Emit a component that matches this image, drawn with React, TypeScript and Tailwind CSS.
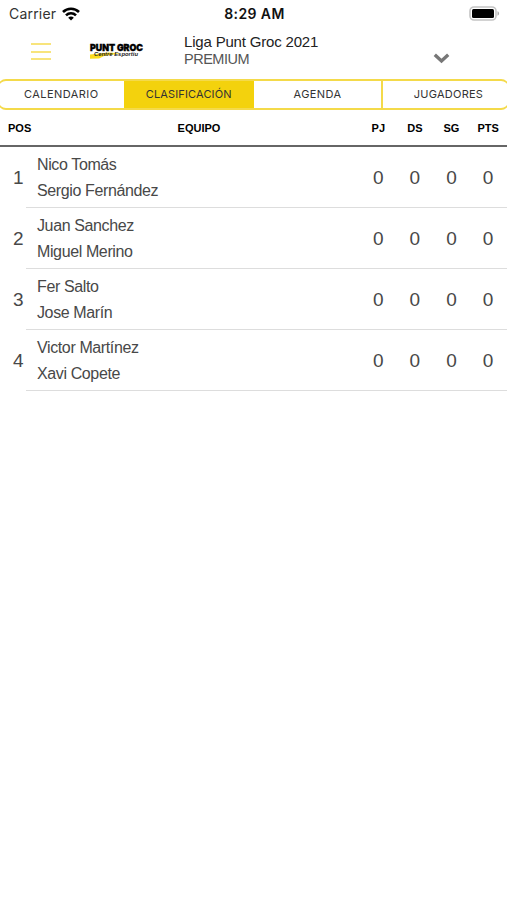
const tabs = [
  { label: 'CALENDARIO', className: 'w-[124.5px] tracking-[0.45px]' },
  { label: 'CLASIFICACIÓN', className: 'w-[130.5px] bg-[#f3d20d] tracking-[0.15px]' },
  { label: 'AGENDA', className: 'w-[129px] border-r-2 border-[#f4da4a] tracking-[0.4px]' },
  { label: 'JUGADORES', className: 'w-[127px] pl-1 tracking-[0.25px]' },
];

const teams = [
  { pos: 1, players: ['Nico Tomás', 'Sergio Fernández'], stats: [0, 0, 0, 0] },
  { pos: 2, players: ['Juan Sanchez', 'Miguel Merino'], stats: [0, 0, 0, 0] },
  { pos: 3, players: ['Fer Salto', 'Jose Marín'], stats: [0, 0, 0, 0] },
  { pos: 4, players: ['Victor Martínez', 'Xavi Copete'], stats: [0, 0, 0, 0] },
];

function StatusBar() {
  return (
    <div className="grid h-[27px] grid-cols-3 items-center pl-[9px] pr-[7px] font-['Inter',sans-serif]">
      <div className="flex items-center gap-[6px]">
        <span className="text-[14px] tracking-[0.2px] text-[#333]">Carrier</span>
        <svg width="18" height="14" viewBox="0 0 18 14" fill="none" stroke="#000" strokeWidth="2.6">
          <path d="M1 5C5.4 0.6 12.6 0.6 17 5" />
          <path d="M4 8.3C6.8 5.5 11.2 5.5 14 8.3" />
          <path d="M9 13.5L6.2 10.7C7.7 9.2 10.3 9.2 11.8 10.7Z" fill="#000" stroke="none" />
        </svg>
      </div>
      <span className="text-center text-[14px] font-semibold tracking-[0.4px] text-[#111]">8:29 AM</span>
      <svg className="justify-self-end" width="31" height="15" viewBox="0 0 31 15">
        <rect x="1" y="1" width="26" height="13" rx="4" fill="#fff" stroke="#c4c4c4" strokeWidth="1.6" />
        <rect x="3" y="3" width="22" height="9" rx="1.5" fill="#000" />
        <path d="M28.5 5.3C30.6 6 30.6 9 28.5 9.7Z" fill="#aaa" />
      </svg>
    </div>
  );
}

function Logo() {
  return (
    <svg className="overflow-visible" width="56" height="18" viewBox="0 0 56 18">
      <path d="M1 11.5L20 9.5L31 10.5L15 13L10 15.4L1 15.8Z" fill="#fbdc20" />
      <text x="1" y="7.6" textLength="53" lengthAdjust="spacingAndGlyphs" fontFamily="Inter, sans-serif" fontWeight="900" fontSize="9.6" fill="#000" stroke="#000" strokeWidth="0.4">
        PUNT GROC
      </text>
      <text x="5" y="12.8" textLength="44" lengthAdjust="spacingAndGlyphs" fontFamily="Liberation Sans, sans-serif" fontStyle="italic" fontWeight="700" fontSize="4.5" fill="#222">
        Centre Esportiu
      </text>
    </svg>
  );
}

function Header() {
  return (
    <header className="flex h-[52px] items-start">
      <div className="ml-[31px] mt-[16px] flex w-5 flex-col gap-[5.5px]">
        <span className="h-[2px] bg-[#f8e47c]" />
        <span className="h-[2px] bg-[#f8e47c]" />
        <span className="h-[2px] bg-[#f8e47c]" />
      </div>
      <div className="ml-[38px] mt-[16px]">
        <Logo />
      </div>
      <div className="ml-[39px] mt-[6px] w-[200px] leading-[17.5px]">
        <div className="text-[15px] tracking-[-0.18px] text-[#222]">Liga Punt Groc 2021</div>
        <div className="text-[14.5px] tracking-[-0.5px] text-[#555]">PREMIUM</div>
      </div>
      <svg className="ml-[49px] mt-[26px]" width="17" height="11" viewBox="0 0 17 11" fill="none" stroke="#777" strokeWidth="3.4">
        <path d="M1.8 1.8L8.5 8L15.2 1.8" />
      </svg>
    </header>
  );
}

function Tabs() {
  return (
    <nav className="-mx-[2px] flex h-[31px] overflow-hidden rounded-[8px] border-y-2 border-l border-r border-[#f4da4a] font-['Inter',sans-serif]">
      {tabs.map((tab) => (
        <button key={tab.label} className={`${tab.className} flex shrink-0 items-center justify-center text-[11px] text-[#333]`}>
          {tab.label}
        </button>
      ))}
    </nav>
  );
}

function Standings() {
  return (
    <section>
      <div className="flex h-[37px] items-center border-b-2 border-[#666] pt-[2px] text-[11px] font-bold text-black">
        <span className="w-[38px] pl-[8px]">POS</span>
        <span className="w-[322px] text-center">EQUIPO</span>
        {['PJ', 'DS', 'SG', 'PTS'].map((label) => (
          <span key={label} className="w-[36.6px] text-center">{label}</span>
        ))}
      </div>
      {teams.map((team) => (
        <div key={team.pos} className="flex h-[61.1px] text-[#484848]">
          <span className="flex w-[26px] shrink-0 items-center pl-[13px] pt-px text-[19px]">{team.pos}</span>
          <div className="flex flex-1 items-center border-b border-[#ddd] pt-[2px]">
            <div className="w-[334px] pl-[11px] text-[16px] leading-[26px] tracking-[-0.38px]">
              {team.players.map((player) => (
                <div key={player}>{player}</div>
              ))}
            </div>
            {team.stats.map((value, i) => (
              <span key={i} className="w-[36.6px] text-center text-[19px]">{value}</span>
            ))}
          </div>
        </div>
      ))}
    </section>
  );
}

export default function App() {
  return (
    <div className="h-[900px] w-[507px] overflow-hidden bg-white font-['Liberation_Sans',sans-serif]">
      <StatusBar />
      <Header />
      <Tabs />
      <Standings />
    </div>
  );
}
